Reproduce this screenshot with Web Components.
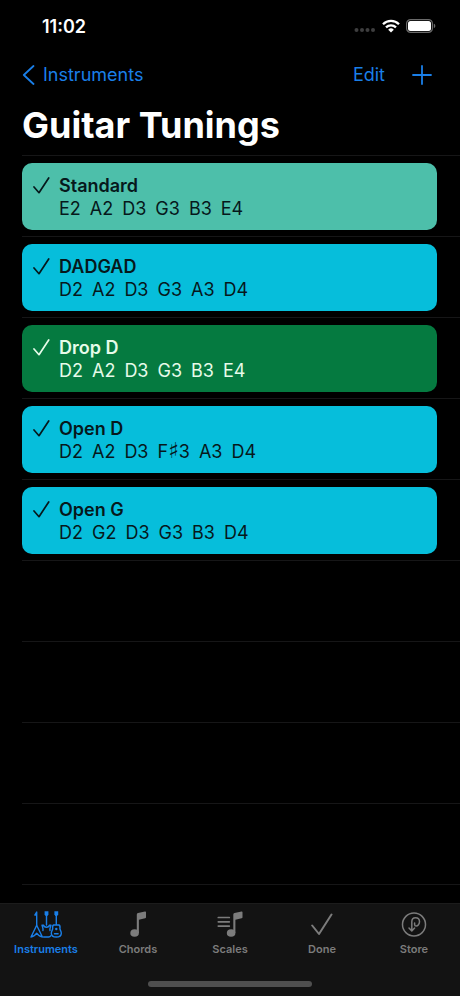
<!DOCTYPE html>
<html lang="en">
<head>
<meta charset="utf-8">
<meta name="viewport" content="width=device-width, initial-scale=1">
<title>Guitar Tunings</title>
<style>
  :root {
    --tint: #1a7fe8;
    --muted: #7c7c7c;
    --separator: #161617;
    --bar: #131313;
  }

  body {
    margin: 0;
    background: #000;
    color: #fff;
    font-family: Inter, "Liberation Sans", sans-serif;
  }
</style>
</head>
<body>
<tunings-app></tunings-app>

<script>
class StatusBar extends HTMLElement {
  constructor() {
    super();
    this.attachShadow({ mode: 'open' });
  }

  connectedCallback() {
    this.shadowRoot.innerHTML = `
      <style>
        :host {
          display: flex;
          align-items: center;
          justify-content: space-between;
          height: 52px;
          padding: 0 24px 0 42px;
          font-size: 18px;
          font-weight: 600;
        }
        .icons {
          display: flex;
          align-items: center;
          gap: 6px;
        }
        svg { display: block; }
      </style>
      <time><slot></slot></time>
      <div class="icons">
        <svg width="22" height="14" viewBox="0 0 22 14" fill="#3e3e3f">
          <circle cx="2.5" cy="11" r="2"/><circle cx="8" cy="11" r="2"/>
          <circle cx="13.5" cy="11" r="2"/><circle cx="19" cy="11" r="2"/>
        </svg>
        <svg width="18" height="14" viewBox="0 0 18 14" fill="none" stroke="#fff" stroke-width="2.3">
          <path d="M1 5.2a11.4 11.4 0 0 1 16 0"/>
          <path d="M4 8.4a7.2 7.2 0 0 1 10 0"/>
          <path d="M9 13.6 6.2 10.7a4 4 0 0 1 5.6 0z" fill="#fff" stroke="none"/>
        </svg>
        <svg width="30" height="14" viewBox="0 0 30 14">
          <rect x=".6" y=".6" width="25.8" height="12.8" rx="4" fill="none" stroke="#6a6a6a" stroke-width="1.2"/>
          <rect x="2" y="2" width="23" height="10" rx="2.5" fill="#fff"/>
          <path d="M27.8 4.8c2 .6 2 3.8 0 4.4z" fill="#6a6a6a"/>
        </svg>
      </div>
    `;
  }
}

class NavHeader extends HTMLElement {
  constructor() {
    super();
    this.attachShadow({ mode: 'open' });
  }

  connectedCallback() {
    this.shadowRoot.innerHTML = `
      <style>
        :host { display: block; }
        nav {
          display: flex;
          align-items: center;
          justify-content: space-between;
          height: 46px;
          padding: 0 28px 0 22px;
        }
        a, button {
          display: flex;
          align-items: center;
          padding: 0;
          border: none;
          background: none;
          color: var(--tint);
          font: inherit;
          font-size: 18px;
          line-height: 24px;
          text-decoration: none;
          cursor: pointer;
        }
        a { gap: 8px; }
        .actions {
          display: flex;
          align-items: center;
          gap: 27px;
        }
        svg { display: block; }
        h1 {
          margin: 0;
          padding: 3px 22px 6px;
          font-size: 36px;
          line-height: 48px;
          font-weight: 700;
        }
      </style>
      <nav>
        <a href="#instruments">
          <svg width="13" height="20" viewBox="0 0 13 20" fill="none" stroke="currentColor" stroke-width="1.8" stroke-linecap="round" stroke-linejoin="round"><path d="M11.5 1 1.8 10l9.7 9"/></svg>
          <slot name="back"></slot>
        </a>
        <div class="actions">
          <button type="button">Edit</button>
          <button type="button" aria-label="Add tuning">
            <svg width="20" height="20" viewBox="0 0 20 20" fill="none" stroke="currentColor" stroke-width="1.8" stroke-linecap="round"><path d="M10 1v18M1 10h18"/></svg>
          </button>
        </div>
      </nav>
      <h1><slot></slot></h1>
    `;
  }
}

class TuningRow extends HTMLElement {
  constructor() {
    super();
    this.attachShadow({ mode: 'open' });
  }

  connectedCallback() {
    const notes = this.getAttribute('notes').split(' ')
      .map((note) => `<span>${note.replace('♯', '<span class="sharp">♯</span>')}</span>`)
      .join(' ');

    this.shadowRoot.innerHTML = `
      <style>
        :host {
          display: block;
          flex: none;
          box-sizing: border-box;
          height: 81px;
          margin-left: 22px;
          padding: 7px 23px 6px 0;
          border-top: 1px solid var(--separator);
        }
        button {
          display: flex;
          gap: 9px;
          width: 100%;
          height: 67px;
          padding: 11px;
          border: none;
          border-radius: 10px;
          background: var(--card, #06bedb);
          color: var(--ink, #06181b);
          font: inherit;
          font-size: 18px;
          line-height: 23px;
          text-align: left;
          cursor: pointer;
        }
        svg {
          flex: none;
          margin-top: 3px;
        }
        .text, strong { display: block; }
        strong { font-weight: 600; }
        .notes {
          display: flex;
          gap: 9px;
        }
        .sharp {
          font-family: "DejaVu Sans", sans-serif;
          font-size: 22px;
          line-height: 1;
        }
      </style>
      <button type="button">
        <svg width="17" height="18" viewBox="0 0 17 18" fill="none" stroke="currentColor" stroke-width="1.7" stroke-linecap="round" stroke-linejoin="round"><path d="M1 10 6 15.7 15.7 1"/></svg>
        <span class="text">
          <strong><slot></slot></strong>
          <span class="notes">${notes}</span>
        </span>
      </button>
    `;
  }
}

// separator line only, fills the list below the last tuning
class EmptyRow extends HTMLElement {
  constructor() {
    super();
    this.attachShadow({ mode: 'open' });
    this.shadowRoot.innerHTML = `
      <style>
        :host {
          display: block;
          flex: none;
          height: 80px;
          margin-left: 22px;
          border-top: 1px solid var(--separator);
        }
      </style>
    `;
  }
}

class TabItem extends HTMLElement {
  constructor() {
    super();
    this.attachShadow({ mode: 'open' });
  }

  connectedCallback() {
    this.shadowRoot.innerHTML = `
      <style>
        :host {
          display: block;
          flex: 1;
          color: var(--muted);
        }
        :host([selected]) { color: var(--tint); }
        a {
          display: flex;
          flex-direction: column;
          align-items: center;
          gap: 3px;
          color: inherit;
          font-size: 11px;
          line-height: 14px;
          font-weight: 600;
          text-decoration: none;
        }
        ::slotted(svg) {
          display: block;
          height: 30px;
        }
      </style>
      <a href="#${this.getAttribute('name')}">
        <slot name="icon"></slot>
        <slot></slot>
      </a>
    `;
  }
}

class TabBar extends HTMLElement {
  constructor() {
    super();
    this.attachShadow({ mode: 'open' });
    this.shadowRoot.innerHTML = `
      <style>
        :host {
          display: block;
          background: var(--bar);
          border-top: 1px solid #1c1c1c;
        }
        nav {
          display: flex;
          padding-top: 5px;
        }
        .home {
          width: 164px;
          height: 6px;
          margin: 25px auto 9px;
          border-radius: 3px;
          background: #4f4f4f;
        }
      </style>
      <nav><slot></slot></nav>
      <div class="home"></div>
    `;
  }
}

class TuningsApp extends HTMLElement {
  constructor() {
    super();
    this.attachShadow({ mode: 'open' });
  }

  connectedCallback() {
    this.shadowRoot.innerHTML = `
      <style>
        :host {
          display: flex;
          flex-direction: column;
          height: 100vh;
        }
        main {
          display: flex;
          flex: 1;
          flex-direction: column;
          min-height: 0;
          overflow: hidden;
        }
        .teal { --card: #4dbfaa; }
        .green { --card: #057a40; --ink: #e6fbe9; }
      </style>
      <status-bar>11:02</status-bar>
      <nav-header><span slot="back">Instruments</span>Guitar Tunings</nav-header>
      <main>
        <tuning-row class="teal" notes="E2 A2 D3 G3 B3 E4">Standard</tuning-row>
        <tuning-row notes="D2 A2 D3 G3 A3 D4">DADGAD</tuning-row>
        <tuning-row class="green" notes="D2 A2 D3 G3 B3 E4">Drop D</tuning-row>
        <tuning-row notes="D2 A2 D3 F♯3 A3 D4">Open D</tuning-row>
        <tuning-row notes="D2 G2 D3 G3 B3 D4">Open G</tuning-row>
        <empty-row></empty-row>
        <empty-row></empty-row>
        <empty-row></empty-row>
        <empty-row></empty-row>
        <empty-row></empty-row>
      </main>
      <tab-bar>
        <tab-item name="instruments" selected>
          <svg slot="icon" width="32" height="30" viewBox="0 0 32 30" fill="none" stroke="currentColor" stroke-width="1.4" stroke-linejoin="round" stroke-linecap="round">
            <path d="M6.7 16V3L4.8 6h1.9"/>
            <path d="M6.7 16.2 1 28q3 0 5.700-3.800Q9.400 28 12.400 28z"/>
            <path d="M16.5 5v11"/>
            <path d="M14.6 2.300h3.800v3l-1 1.700h-1.800l-1-1.700z" fill="currentColor" stroke="none"/>
            <path d="M12 16.200h1.600q.3 2 2.900 2t2.900-2H21c-.4 2-1.600 3.500-1 5.300M12 16.200c.4 2 1.500 3.300.9 5.300M13.600 28h5q1.600 0 2.200-1.200"/>
            <path d="M26.300 5v10.500"/>
            <path d="M24.400 2.300h3.800v3l-1 1.700h-1.800l-1-1.700z" fill="currentColor" stroke="none"/>
            <path d="M23.700 16h5.200c1.300.6 1.300 2 1 3.500-.1 1.500 1.400 2.300 1.400 4.700 0 2.800-1.800 3.800-5 3.800s-5-1-5-3.800c0-2.400 1.500-3.200 1.400-4.700-.3-1.500-.3-2.900 1-3.500z"/>
            <circle cx="26.3" cy="20" r="1.200" fill="currentColor" stroke="none"/>
            <path d="M24.500 24.800h3.600"/>
          </svg>
          Instruments
        </tab-item>
        <tab-item name="chords">
          <svg slot="icon" width="16" height="30" viewBox="0 0 16 30" fill="currentColor">
            <ellipse cx="4.6" cy="24" rx="4.3" ry="3.8"/>
            <path d="M6.8 5.600q0-1.300 1.200-1.600l7-1.500q1-.2 1 .8v4.900q0 .9-.9 1.100L8.900 10.700V24H6.800z"/>
          </svg>
          Chords
        </tab-item>
        <tab-item name="scales">
          <svg slot="icon" width="26" height="30" viewBox="0 0 26 30" fill="currentColor">
            <ellipse cx="14.1" cy="24" rx="4.3" ry="3.8"/>
            <path d="M16.3 5.600q0-1.300 1.200-1.600l7-1.500q1-.2 1 .8v4.900q0 .9-.9 1.100L18.400 10.700V24H16.300z"/>
            <path d="M1.300 8.500h11M1.300 12.800h11M1.300 17.100h11" fill="none" stroke="currentColor" stroke-width="1.7" stroke-linecap="round"/>
          </svg>
          Scales
        </tab-item>
        <tab-item name="done">
          <svg slot="icon" width="22" height="30" viewBox="0 0 22 30" fill="none" stroke="currentColor" stroke-width="2" stroke-linecap="round" stroke-linejoin="round">
            <path d="M1.200 16.500 8 25 20.500 5.500"/>
          </svg>
          Done
        </tab-item>
        <tab-item name="store">
          <svg slot="icon" width="26" height="30" viewBox="0 0 26 30" fill="none" stroke="currentColor" stroke-width="1.5" stroke-linecap="round" stroke-linejoin="round">
            <circle cx="13" cy="15.5" r="11.5"/>
            <path d="M8 19l2.800 3 2.800-3M10.800 21.500V13c0-2.800 1.600-4.200 3.700-4.200 2.300 0 4 1.700 4 4s-1.700 4.200-3.300 4.200c-1.200 0-1.600-.8-1.600-1.600v-1.400"/>
          </svg>
          Store
        </tab-item>
      </tab-bar>
    `;
  }
}

customElements.define('status-bar', StatusBar);
customElements.define('nav-header', NavHeader);
customElements.define('tuning-row', TuningRow);
customElements.define('empty-row', EmptyRow);
customElements.define('tab-item', TabItem);
customElements.define('tab-bar', TabBar);
customElements.define('tunings-app', TuningsApp);
</script>
</body>
</html>
